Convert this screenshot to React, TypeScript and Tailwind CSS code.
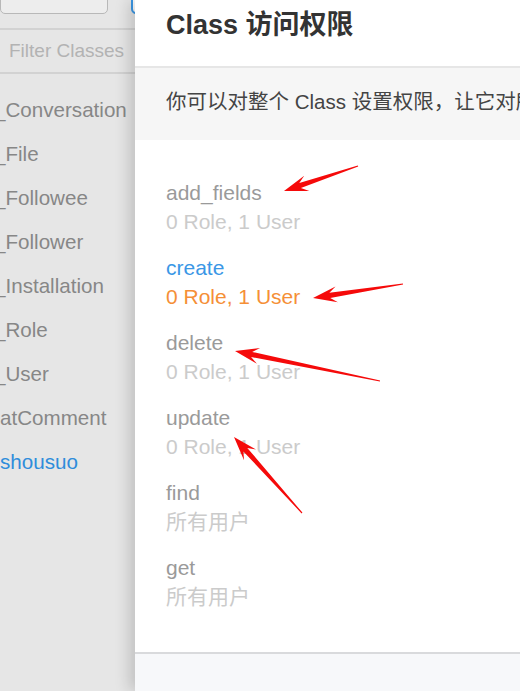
import React from 'react'

const font = "font-['Liberation_Sans','Noto_Sans_CJK_SC',sans-serif]"

const classes = [
  { name: '_Conversation', shift: true },
  { name: '_File', shift: true },
  { name: '_Followee', shift: true },
  { name: '_Follower', shift: true },
  { name: '_Installation', shift: true },
  { name: '_Role', shift: true },
  { name: '_User', shift: true },
  { name: 'atComment', shift: false },
  { name: 'shousuo', shift: false, active: true },
]

const perms = [
  { name: 'add_fields', value: '0 Role, 1 User' },
  { name: 'create', value: '0 Role, 1 User', active: true },
  { name: 'delete', value: '0 Role, 1 User' },
  { name: 'update', value: '0 Role, 1 User' },
  { name: 'find', value: '所有用户' },
  { name: 'get', value: '所有用户' },
]

// red annotation arrows: [tailX, tailY, tipX, tipY]
const arrows = [
  [358, 166, 284, 191],
  [403, 284, 313, 298],
  [380, 381, 235, 351],
  [302, 513, 234, 437],
]

function arrowPoints(tx: number, ty: number, px: number, py: number) {
  const len = Math.hypot(px - tx, py - ty)
  const dx = (px - tx) / len
  const dy = (py - ty) / len
  const nx = -dy
  const ny = dx
  const at = (back: number, side: number) =>
    `${(px - dx * back + nx * side).toFixed(1)},${(py - dy * back + ny * side).toFixed(1)}`
  const tail = (side: number) => `${(tx + nx * side).toFixed(1)},${(ty + ny * side).toFixed(1)}`
  return [
    tail(0.6),
    at(17, 2.6),
    at(24, 8),
    at(0, 0),
    at(24, -8),
    at(17, -2.6),
    tail(-0.6),
  ].join(' ')
}

export default function App() {
  return (
    <div className={`relative flex w-[520px] h-[691px] overflow-hidden bg-[#e6e6e6] ${font}`}>
      {/* Sidebar */}
      <aside className="w-[135px] shrink-0 flex flex-col overflow-hidden">
        <div className="h-[28px] flex items-start gap-[23px] overflow-hidden">
          <div className="w-[108px] h-[40px] -mt-[26px] shrink-0 rounded-[5px] border border-[#b8b8b8] bg-[#ededed]" />
          <div className="w-[40px] h-[40px] -mt-[26px] shrink-0 rounded-[5px] border-2 border-[#3b98e6] bg-white" />
        </div>
        <div className="h-[46px] border-t-2 border-b-2 border-[#d2d2d2] flex items-center pl-[9px]">
          <span className="text-[19px] text-[#b3b3b3] whitespace-nowrap">Filter Classes</span>
        </div>
        <ul className="pt-[14px] flex flex-col">
          {classes.map((c) => (
            <li
              key={c.name}
              className={`h-[44px] flex items-center text-[20.6px] whitespace-nowrap ${c.shift ? '-ml-[6px]' : 'ml-0'} ${c.active ? 'text-[#2f8ddb]' : 'text-[#878787]'}`}
            >
              {c.name}
            </li>
          ))}
        </ul>
      </aside>

      {/* Panel */}
      <section className="flex-1 flex flex-col bg-white shadow-[-6px_0_14px_rgba(0,0,0,0.16)] z-10">
        <header className="h-[68px] border-b-2 border-[#e6e6e6] pl-[31px] pt-[7px]">
          <h1 className="text-[27px] leading-[36px] font-bold text-[#333] whitespace-nowrap">Class 访问权限</h1>
        </header>
        <div className="h-[72px] bg-[#f6f6f6] pl-[31px] pt-[20px] overflow-hidden">
          <p className="text-[20.5px] leading-[28px] text-[#444] whitespace-nowrap">你可以对整个 Class 设置权限，让它对所有用户可见</p>
        </div>
        <div className="flex-1 flex">
          <ul className="flex-1 pl-[31px] pt-[38px] flex flex-col gap-[17px]">
            {perms.map((p) => (
              <li key={p.name} className="flex flex-col text-[21px] leading-[29px] whitespace-nowrap">
                <span className={p.active ? 'text-[#3a97e6]' : 'text-[#9a9a9a]'}>{p.name}</span>
                <span className={p.active ? 'text-[#f58f37]' : 'text-[#cbcbcb]'}>{p.value}</span>
              </li>
            ))}
          </ul>
          <div className="w-[4px] h-[450px] mt-[30px] border-r-2 border-[#ececec]">
            <div className="mt-[75px] h-[75px] w-[2px] bg-[#3a97e8]" />
          </div>
        </div>
        <footer className="h-[39px] border-t-2 border-[#d9dadc] bg-[#f7f8fa]" />
      </section>

      {/* Annotation arrows */}
      <svg className="absolute inset-0 z-20 pointer-events-none" width="520" height="691" viewBox="0 0 520 691">
        {arrows.map(([tx, ty, px, py], i) => (
          <polygon key={i} points={arrowPoints(tx, ty, px, py)} fill="#f50a0a" />
        ))}
      </svg>
    </div>
  )
}
